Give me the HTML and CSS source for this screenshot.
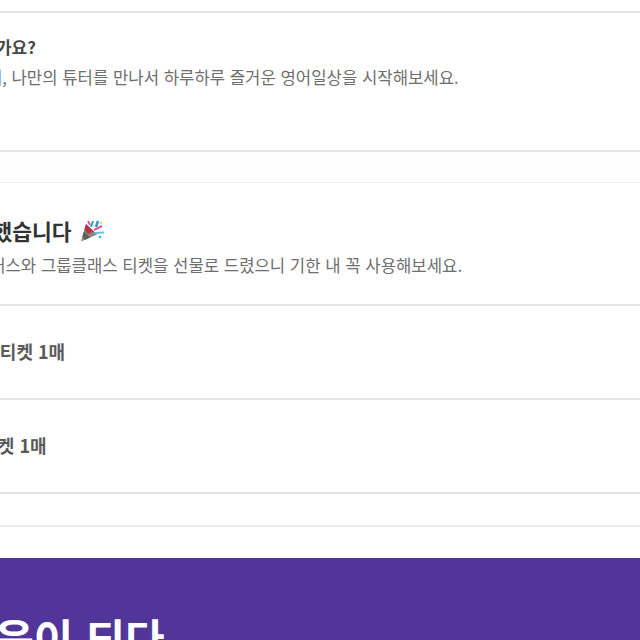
FILE: index.html
```html
<!DOCTYPE html>
<html lang="ko">
<head>
<meta charset="UTF-8">
<meta name="viewport" content="width=device-width, initial-scale=1.0">
<title>튜터링</title>
<link rel="stylesheet" href="styles.css">
</head>
<body>
<div class="page">
  <div class="spacer-top"></div>
  <section class="block intro">
    <h3 class="intro-title">튜터링은 어떤 서비스인가요?</h3>
    <p class="desc desc-intro">언제 어디서나 쉽게, 나만의 튜터를 만나서 하루하루 즐거운 영어일상을 시작해보세요.</p>
  </section>
  <div class="gap"></div>
  <section class="block welcome">
    <h2 class="welcome-title">회원가입을 완료했습니다
      <svg class="popper" viewBox="0 0 24 24" width="24" height="24" aria-hidden="true">
        <path d="M1 22.5 L6 5 L17 15.5 Z" fill="#8b8885"/>
        <path d="M4.4 10.5 L6 5 L14 12.6 L8 15 Z" fill="#b5324c"/>
        <path d="M2.4 17.5 L4 12.5 L10 18.5 L5 21 Z" fill="#5f5d5b"/>
        <path d="M11 8 L13 2" stroke="#35a6c6" stroke-width="2.2" fill="none"/>
        <path d="M14 11 L22 7" stroke="#e0559a" stroke-width="2" fill="none"/>
        <path d="M15 14 L24 13.5" stroke="#58c6df" stroke-width="2.2" fill="none"/>
        <path d="M8 2 L10 6" stroke="#e0559a" stroke-width="2" fill="none"/>
        <path d="M18 2 L16 8" stroke="#2d9fc0" stroke-width="2.6" fill="none"/>
        <circle cx="21" cy="4" r="1" fill="#e9b949"/>
        <circle cx="20" cy="18" r="1.2" fill="#3fa9c9"/>
      </svg>
    </h2>
    <p class="desc desc-welcome">신규 회원님께 마스터스와 그룹클래스 티켓을 선물로 드렸으니 기한 내 꼭 사용해보세요.</p>
  </section>
  <div class="ticket">그룹클래스 티켓 1매</div>
  <div class="ticket ticket-second">프리패스 티켓 1매</div>
  <div class="gap gap-plain"></div>
  <div class="gap-last"></div>
  <section class="banner">
    <h1 class="banner-title">영어가 믿음이 되다</h1>
  </section>
</div>
</body>
</html>
```

FILE: styles.css
```css
html, body {
  margin: 0;
  height: 640px;
  overflow: hidden;
  background: #fff;
}
body {
  font-family: "Noto Sans CJK KR", "Noto Sans", sans-serif;
}
.page {
  margin-left: -240px;
  width: 880px;
  white-space: nowrap;
}
.spacer-top {
  height: 11px;
  background: #fff;
}
.block, .ticket {
  padding-left: 100px;
  border-bottom: 2px solid #e4e4e4;
  box-sizing: border-box;
}
.intro {
  height: 141px;
  border-top: 2px solid #e4e4e4;
  padding-top: 23px;
}
.intro-title {
  margin: 0 0 0 -30px;
  font-size: 17px;
  line-height: 22px;
  font-weight: 700;
  color: #484848;
}
.desc {
  margin: 0;
  font-size: 16.7px;
  line-height: 22px;
  font-weight: 400;
  color: #6e6e6e;
}
.desc-intro {
  margin-top: 8px;
  margin-left: 10px;
}
.gap {
  height: 31px;
  background: #fefefe;
  border-bottom: 1px solid #eeeeee;
  box-sizing: border-box;
}
.welcome {
  height: 123px;
  padding-top: 33px;
}
.welcome-title {
  margin: 0 0 0 -12px;
  font-size: 21.5px;
  line-height: 30px;
  font-weight: 700;
  color: #333;
  display: flex;
  align-items: center;
  gap: 8px;
}
.desc-welcome {
  margin-top: 8px;
  margin-left: -2px;
}
.ticket {
  height: 94px;
  padding-left: 152px;
  padding-bottom: 3px;
  display: flex;
  align-items: center;
  font-size: 18px;
  font-weight: 700;
  color: #5a5a5a;
}
.ticket-second {
  padding-left: 150px;
  padding-bottom: 2px;
}
.gap-plain {
  height: 33px;
  background: #fff;
  border-bottom: 2px solid #ececec;
}
.gap-last {
  height: 31px;
}
.banner {
  height: 82px;
  background: #513598;
  padding-left: 64px;
}
.banner-title {
  margin: 0;
  padding-top: 54px;
  font-size: 43px;
  line-height: 50px;
  font-weight: 700;
  color: #fff;
}
```
